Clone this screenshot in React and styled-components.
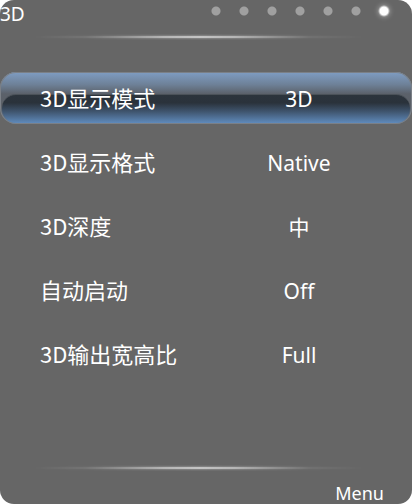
import React, { useState } from "react";
import styled, { createGlobalStyle, css } from "styled-components";

const GlobalStyle = createGlobalStyle`
  *, *::before, *::after { box-sizing: border-box; }
  body { margin: 0; background: #fff; }
  button { font: inherit; color: inherit; background: none; border: 0; padding: 0; cursor: pointer; }
`;

const Panel = styled.main`
  display: flex;
  flex-direction: column;
  min-height: 100vh;
  overflow: hidden;
  border-radius: 14px;
  background: #666;
  color: #fff;
  font-family: "Noto Sans", "Noto Sans CJK SC", sans-serif;
`;

const Header = styled.header`
  display: flex;
  justify-content: space-between;
  height: 34px;
  padding-right: 22px;
`;

const Title = styled.h1`
  margin: 0;
  font-size: 19px;
  font-weight: 400;
  line-height: 28px;
`;

const Pages = styled.nav`
  display: flex;
  align-items: center;
  gap: 16px;
  height: 21px;
`;

const PageDot = styled.button`
  width: 12px;
  height: 12px;
  border-radius: 50%;
  background: radial-gradient(circle, #a0a0a0 4px, transparent 5px);
  ${({ $active }) =>
    $active &&
    css`
      background: radial-gradient(circle, #fff 4px, rgba(255, 255, 255, 0.45) 5px, transparent 6px);
      box-shadow: 0 0 5px rgba(255, 255, 255, 0.4), inset 0 0 4px rgba(255, 255, 255, 0.4);
    `}
`;

const Divider = styled.hr`
  flex: none;
  width: 84%;
  height: 6px;
  margin: 0 auto;
  border: 0;
  background: linear-gradient(
    transparent,
    rgba(255, 255, 255, 0.18) 25%,
    rgba(255, 255, 255, 0.62) 40%,
    rgba(255, 255, 255, 0.62) 60%,
    rgba(255, 255, 255, 0.18) 75%,
    transparent
  );
  mask-image: linear-gradient(
    90deg,
    transparent,
    rgba(0, 0, 0, 0.15) 15%,
    rgba(0, 0, 0, 0.85) 38%,
    #000 48%,
    rgba(0, 0, 0, 0.85) 58%,
    rgba(0, 0, 0, 0.12) 80%,
    transparent 96%
  );
`;

const Settings = styled.ul`
  display: flex;
  flex: 1;
  flex-direction: column;
  gap: 12px;
  margin: 0;
  padding: 32px 0 0;
  list-style: none;
`;

const SettingRow = styled.button`
  position: relative;
  display: grid;
  grid-template-columns: 47fr 50fr 6fr;
  align-items: center;
  isolation: isolate;
  width: 100%;
  height: 52px;
  overflow: hidden;
  border-radius: 16px;
  font-size: 22px;
  line-height: 32px;
  ${({ $selected }) =>
    $selected &&
    css`
      box-shadow: inset 0 0 0 1px #7b8087;
      background: linear-gradient(#7f9dc3, #6e8198 24%, #5b616a 42%, #5b6067 65%, #66798f);
      &::before {
        content: "";
        position: absolute;
        z-index: -1;
        inset: 22px 2px 1px;
        border-top: 1px solid #4b5259;
        border-radius: 14px;
        background: linear-gradient(#2c343c, #2a323b 28%, #405670 60%, #5f8abb);
      }
    `}
`;

const SettingLabel = styled.span`
  padding: 0 0 2px 40px;
  font-family: "Noto Sans CJK SC", sans-serif;
  text-align: left;
  white-space: nowrap;
`;

const SettingValue = styled.span`
  padding: 2px 0 0 22px;
  font-size: 21px;
  text-align: center;
`;

const Footer = styled.footer`
  display: flex;
  justify-content: flex-end;
  align-items: center;
  height: 33px;
  padding: 10px 28px 0 0;
`;

const MenuButton = styled.button`
  && {
    font-size: 18px;
    line-height: 22px;
  }
`;

const settings = [
  ["3D显示模式", "3D"],
  ["3D显示格式", "Native"],
  ["3D深度", "中"],
  ["自动启动", "Off"],
  ["3D输出宽高比", "Full"],
];

const pages = [1, 2, 3, 4, 5, 6, 7];

export default function App() {
  const [selected, setSelected] = useState(0);
  const [page, setPage] = useState(7);

  return (
    <Panel lang="zh-CN">
      <GlobalStyle />
      <Header>
        <Title>3D</Title>
        <Pages>
          {pages.map((n) => (
            <PageDot
              key={n}
              type="button"
              aria-label={`${n}`}
              aria-current={n === page ? "page" : undefined}
              $active={n === page}
              onClick={() => setPage(n)}
            />
          ))}
        </Pages>
      </Header>
      <Divider />
      <Settings>
        {settings.map(([label, value], index) => (
          <li key={label}>
            <SettingRow
              type="button"
              aria-pressed={index === selected}
              $selected={index === selected}
              onClick={() => setSelected(index)}
            >
              <SettingLabel>{label}</SettingLabel>
              <SettingValue>{value}</SettingValue>
            </SettingRow>
          </li>
        ))}
      </Settings>
      <Divider />
      <Footer>
        <MenuButton type="button">Menu</MenuButton>
      </Footer>
    </Panel>
  );
}
